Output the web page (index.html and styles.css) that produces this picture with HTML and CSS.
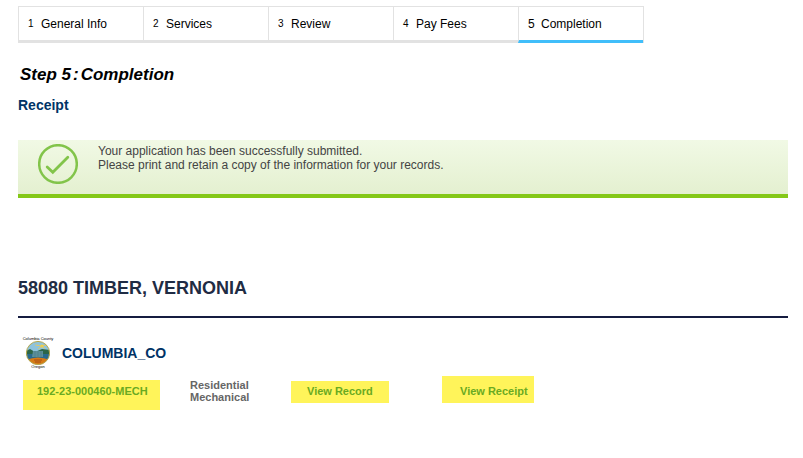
FILE: index.html
```
<!DOCTYPE html>
<html lang="en">
<head>
    <meta charset="UTF-8">
    <meta name="viewport" content="width=device-width, initial-scale=1.0">
    <title>Completion</title>
    <link rel="stylesheet" href="styles.css">
</head>
<body>
    <div class="container">
        <ol class="steps">
            <li><span class="num">1</span>General Info</li>
            <li><span class="num">2</span>Services</li>
            <li><span class="num">3</span>Review</li>
            <li><span class="num">4</span>Pay Fees</li>
            <li class="active" aria-current="step"><span class="num">5</span>Completion</li>
        </ol>

        <h1><span>Step 5</span><span>:</span><span>Completion</span></h1>
        <h2>Receipt</h2>

        <div class="message" role="status">
            <svg class="check" viewBox="0 0 40 40" aria-hidden="true">
                <circle cx="20" cy="20" r="18.8" fill="none" stroke="#82c44a" stroke-width="2.5"/>
                <path d="M9.2 23 L14.8 28.2 L29.8 13.2" fill="none" stroke="#82c44a" stroke-width="2.8" stroke-linecap="round"/>
            </svg>
            <p>Your application has been successfully submitted.<br>Please print and retain a copy of the information for your records.</p>
        </div>

        <h3 class="address">58080 TIMBER, VERNONIA</h3>

        <div class="agency">
            <svg class="seal" viewBox="0 0 32 32" aria-hidden="true">
                <defs>
                    <clipPath id="disc"><circle cx="16" cy="16" r="11.5"/></clipPath>
                </defs>
                <text x="16" y="3" class="seal-text">Columbia County</text>
                <g clip-path="url(#disc)">
                    <rect x="4" y="4" width="24" height="24" fill="#8fc3dc"/>
                    <path d="M4 14 L8 12 L13 15 L20 12 L28 13 V22 H4 Z" fill="#2c6648"/>
                    <path d="M4 17 H28 V23 H4 Z" fill="#286a8e"/>
                    <path d="M11 14 H21 V20 H10 Z" fill="#5b8f98"/>
                    <path d="M13 14 V20 M16 14 V20 M19 14 V20" stroke="#4a7a86" stroke-width=".6"/>
                    <path d="M4 23 Q16 18 28 23 V28 H4 Z" fill="#d67a16"/>
                    <path d="M12 23 H20 M13 25 H19" stroke="#a94f12"/>
                    <circle cx="20" cy="9" r="1.6" fill="#f5d348"/>
                    <path d="M20 9 L25 8 M20 9 L13 8 M20 9 L16 12 M20 9 L23 12" stroke="#f0c94a" stroke-width=".8"/>
                </g>
                <circle cx="16" cy="16" r="11.6" fill="none" stroke="#b8a84c"/>
                <text x="16" y="31" class="seal-text">Oregon</text>
            </svg>
            <h4>COLUMBIA_CO</h4>
        </div>

        <div class="record">
            <a class="number" href="#">192-23-000460-MECH</a>
            <p>Residential<br>Mechanical</p>
            <a class="view" href="#">View Record</a>
            <a class="receipt" href="#">View Receipt</a>
        </div>
    </div>
</body>
</html>
```
FILE: styles.css
```
body {
    font-family: "Liberation Sans", Arial, sans-serif;
    font-size: 12px;
    line-height: 14px;
    color: #000;
    background: #fff;
    margin: 0;
}
h1, h2, h3, h4, p {
    margin: 0;
}
.container {
    padding: 6px 15px 20px 18px;
}
.steps {
    display: flex;
    width: fit-content;
    margin: 0 0 21px;
    padding: 0;
    list-style: none;
    border-right: 1px solid #e2e2e2;
}
.steps li {
    display: flex;
    align-items: center;
    box-sizing: border-box;
    width: 125px;
    height: 37px;
    padding-left: 9px;
    border: 1px solid #e2e2e2;
    border-width: 1px 0 3px 1px;
}
.steps .num {
    width: 13px;
    font-size: 10px;
}
.steps .active {
    border-bottom-color: #40befa;
}
.steps .active .num {
    font-size: 12px;
}
h1 {
    display: flex;
    gap: 2px;
    padding-left: 2px;
    font-size: 17px;
    line-height: 22px;
    font-style: italic;
}
h2 {
    margin: 11px 0 27px;
    font-size: 14px;
    line-height: 16px;
    color: #003366;
}
.message {
    display: flex;
    gap: 20px;
    padding: 4px 20px 10px;
    background: linear-gradient(#f1f9e5, #e4f0d0);
    border-bottom: 4px solid #84c818;
    color: #444;
}
.check {
    flex: none;
    width: 40px;
    height: 40px;
}
.address {
    margin-top: 79px;
    padding-bottom: 17px;
    border-bottom: 2px solid #151c40;
    font-size: 18px;
    line-height: 22px;
    color: #1f2c44;
}
.agency {
    display: flex;
    align-items: center;
    gap: 8px;
    margin: 19px 0 7px 4px;
}
.seal {
    width: 32px;
    height: 32px;
}
.seal-text {
    font-size: 4px;
    text-anchor: middle;
}
.agency h4 {
    font-size: 14px;
    line-height: 16px;
    color: #003366;
}
.record {
    display: grid;
    grid-template-columns: 167px 101px 151px auto;
    align-items: start;
    justify-items: start;
    padding-left: 5px;
    font-size: 11px;
    line-height: 12px;
    font-weight: bold;
}
.record p {
    margin-top: 3px;
    color: #666;
}
.record a {
    background: #fff45a;
    color: #6aaa22;
    text-decoration: none;
}
.record .number {
    margin-top: 4px;
    padding: 5px 12px 13px 14px;
}
.record .view {
    margin-top: 5px;
    padding: 4px 16px 6px;
}
.record .receipt {
    padding: 9px 6px 6px 18px;
}
```
